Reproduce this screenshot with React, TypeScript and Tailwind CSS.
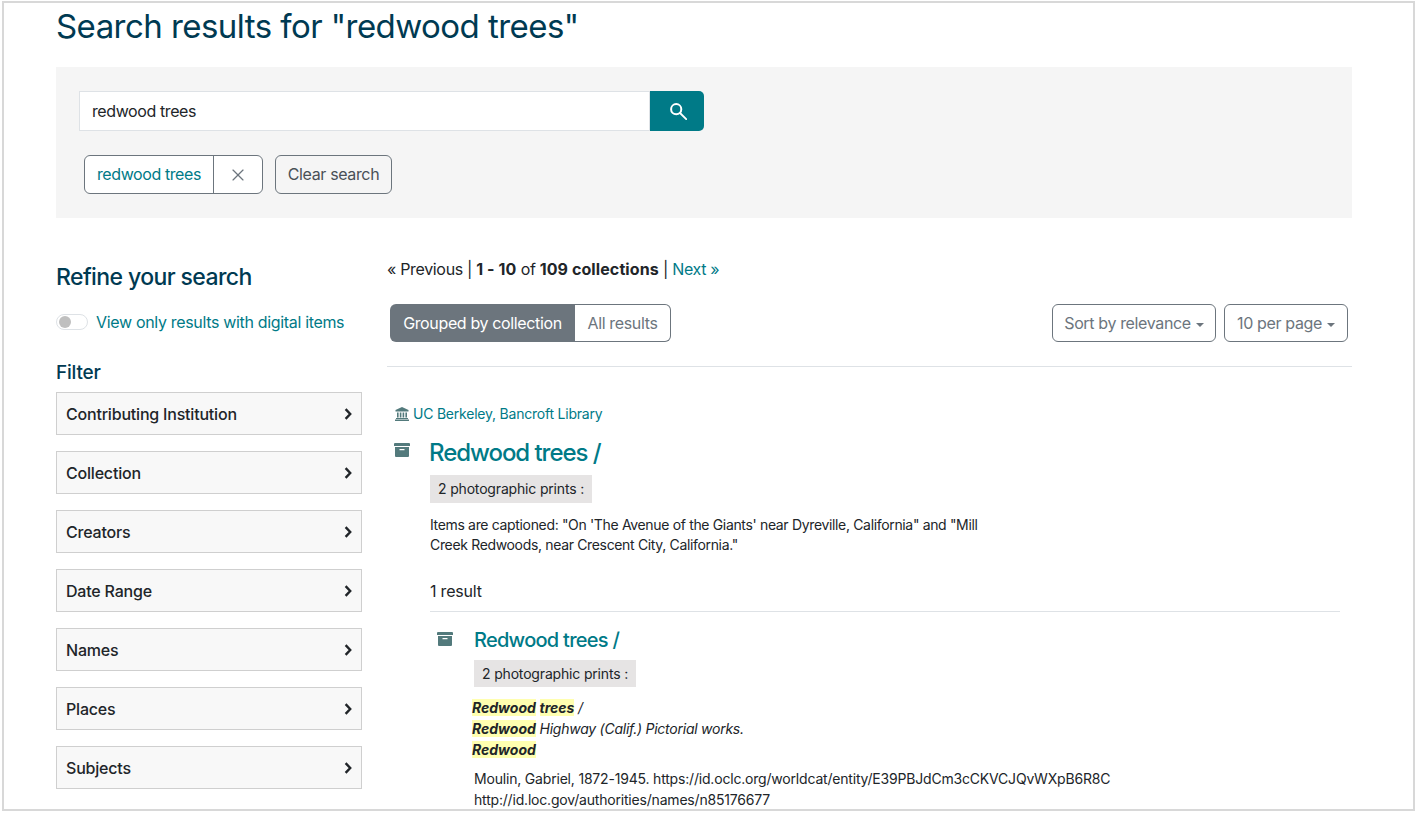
import { X } from "lucide-react";

const FILTERS = ["Contributing Institution", "Collection", "Creators", "Date Range", "Names", "Places", "Subjects"];

function ArchiveIcon() {
  return (
    <svg width="16" height="14" viewBox="0 0 16 14" className="fill-[#537a7c]">
      <path d="M1 0h14a1 1 0 0 1 1 1v2H0V1a1 1 0 0 1 1-1Z" />
      <path d="M1 4h14v9a1 1 0 0 1-1 1H2a1 1 0 0 1-1-1V4Zm4.5 2v1.2h5V6h-5Z" fillRule="evenodd" />
    </svg>
  );
}

function BankIcon() {
  return (
    <svg width="14" height="14" viewBox="0 0 14 14" className="fill-[#537a7c]">
      <path d="M7 0 13.5 3v1.4H.5V3L7 0Z" />
      <path d="M2 5.4h1.6v5H2zM4.8 5.4h1.6v5H4.8zM7.6 5.4h1.6v5H7.6zM10.4 5.4H12v5h-1.6z" />
      <path d="M1 11h12v1H1zM0 12.5h14V14H0z" />
    </svg>
  );
}

function SearchGlyph() {
  return (
    <svg width="17" height="17" viewBox="0 0 17 17" fill="none" className="mt-[1px] ml-[3px] stroke-white">
      <circle cx="6.2" cy="6.2" r="5.1" strokeWidth="2" />
      <path d="M10 10l6.2 6.2" strokeWidth="1.8" strokeLinecap="round" />
    </svg>
  );
}

function Chevron() {
  return (
    <svg width="8" height="12" viewBox="0 0 8 12" fill="none" className="stroke-[#212529]">
      <path d="M1.6 1.2 6.2 6l-4.6 4.8" strokeWidth="2.4" />
    </svg>
  );
}

function Caret() {
  return <span className="ml-[5px] inline-block border-x-[4px] border-t-[4px] border-x-transparent border-t-[#6c757d] align-middle" />;
}

function Mark({ children }: { children: string }) {
  return <mark className="bg-[#ffffb0] font-bold tracking-normal text-[#212529]">{children}</mark>;
}

export default function App() {
  return (
    <div className="h-[813px] w-[1416px] overflow-hidden bg-white pt-[1px] pr-[1px] pb-[2px] pl-[2px] font-['Inter',sans-serif] tracking-[-0.36px] text-[#212529]">
      <div className="h-full overflow-hidden border-2 border-[#d8d8d8] pr-[61px] pl-[52px]">
        <h1 className="pt-[1px] text-[33px] leading-[44px] font-normal tracking-[-0.55px] text-[#003a52]">Search results for "redwood trees"</h1>

        <section className="mt-[19px] h-[151px] bg-[#f5f5f5] pt-[24px] pl-[23px]">
          <div className="flex h-[40px] w-[625px]">
            <div className="flex flex-1 items-center border border-[#dee2e6] bg-white pl-[12px] text-[16px] tracking-[-0.4px]">redwood trees</div>
            <button className="flex w-[54px] items-center justify-center rounded-r-[5px] bg-[#007a87]">
              <SearchGlyph />
            </button>
          </div>
          <div className="mt-[24px] ml-[5px] flex gap-[12px]">
            <div className="flex h-[39px] rounded-[6px] border border-[#6c757d] bg-white text-[16px]">
              <span className="flex w-[129px] items-center justify-center border-r border-[#6c757d] pb-[1px] tracking-[-0.4px] text-[#007a87]">redwood trees</span>
              <span className="flex w-[48px] items-center justify-center text-[#6c757d]"><X size={20} strokeWidth={1.4} /></span>
            </div>
            <button className="h-[39px] w-[117px] rounded-[6px] border border-[#6c757d] pb-[1px] text-[16px] text-[#495057]">Clear search</button>
          </div>
        </section>

        <div className="flex">
          <aside className="w-[306px] shrink-0">
            <h2 className="mt-[44px] text-[23px] leading-[30px] font-medium tracking-[-0.6px] text-[#003a52]">Refine your search</h2>
            <label className="mt-[18px] flex items-center gap-[8px] text-[16px] tracking-[-0.33px] text-[#007a87]">
              <span className="flex h-[16px] w-[32px] items-center rounded-full border border-[#dee2e6] bg-white pl-[2px]">
                <span className="h-[12px] w-[12px] rounded-full bg-[#bfbfbf]" />
              </span>
              View only results with digital items
            </label>
            <h3 className="mt-[26px] text-[19px] leading-[26px] font-medium tracking-[-0.2px] text-[#003a52]">Filter</h3>
            <ul className="mt-[6px] flex flex-col gap-[16px]">
              {FILTERS.map((f) => (
                <li key={f} className="flex h-[43px] items-center justify-between border border-[#cfcfcf] bg-[#f8f8f8] pr-[9px] pl-[9px] text-[16px] font-medium tracking-[-0.2px]">
                  {f}
                  <Chevron />
                </li>
              ))}
            </ul>
          </aside>

          <main className="ml-[25px] flex-1">
            <p className="mt-[39px] text-[16px] leading-[24px] tracking-[-0.33px]">
              « Previous | <b className="font-bold tracking-[0.1px]">1 - 10</b> of <b className="font-bold tracking-[0.1px]">109 collections</b> | <span className="text-[#007a87]">Next »</span>
            </p>
            <div className="mt-[23px] flex justify-between pr-[4px] pl-[3px]">
              <div className="flex h-[38px] text-[16px]">
                <span className="flex w-[185px] items-center justify-center rounded-l-[6px] bg-[#6c757d] text-white">Grouped by collection</span>
                <span className="flex w-[96px] items-center justify-center rounded-r-[6px] border border-l-0 border-[#6c757d] text-[#6c757d]">All results</span>
              </div>
              <div className="flex gap-[8px] text-[16px] text-[#6c757d]">
                <button className="h-[38px] w-[164px] rounded-[6px] border border-[#6c757d]">Sort by relevance<Caret /></button>
                <button className="h-[38px] w-[124px] rounded-[6px] border border-[#6c757d]">10 per page<Caret /></button>
              </div>
            </div>
            <hr className="mt-[24px] border-[#dee2e6]" />

            <div className="mt-[38px] flex items-center gap-[4px] pl-[8px] text-[14px] leading-[18px] tracking-[-0.22px] text-[#007a87]">
              <BankIcon />
              UC Berkeley, Bancroft Library
            </div>

            <div className="mt-[15px] flex pl-[7px]">
              <div className="w-[36px] shrink-0 pt-[5px]"><ArchiveIcon /></div>
              <div className="min-w-0 flex-1 pr-[12px]">
                <h2 className="-ml-[1px] text-[24px] leading-[30px] font-medium tracking-[-1.05px] text-[#007a87]">Redwood trees /</h2>
                <span className="mt-[7px] inline-block h-[28px] bg-[#e6e4e4] px-[8px] text-[14px] leading-[27px] tracking-[-0.17px]">2 photographic prints :</span>
                <p className="mt-[12px] w-[560px] text-[14px] leading-[20px] tracking-[-0.34px]">
                  Items are captioned: "On 'The Avenue of the Giants' near Dyreville, California" and "Mill Creek Redwoods, near Crescent City, California."
                </p>
                <p className="mt-[24px] text-[16px] leading-[24px] tracking-[-0.2px]">1 result</p>
                <hr className="mt-[8px] border-[#dee2e6]" />

                <div className="mt-[13px] flex pl-[7px]">
                  <div className="w-[37px] shrink-0 pt-[7px]"><ArchiveIcon /></div>
                  <div className="flex-1">
                    <h3 className="text-[20px] leading-[30px] font-medium tracking-[-0.73px] text-[#007a87]">Redwood trees /</h3>
                    <span className="mt-[5px] inline-block h-[27px] bg-[#e6e4e4] px-[8px] text-[14px] leading-[27px] tracking-[-0.17px]">2 photographic prints :</span>
                    <div className="mt-[10px] -ml-[2px] text-[14px] leading-[21px] tracking-[-0.25px] italic">
                      <div><Mark>Redwood</Mark> <Mark>trees</Mark> /</div>
                      <div><Mark>Redwood</Mark> Highway (Calif.) Pictorial works.</div>
                      <div><Mark>Redwood</Mark></div>
                    </div>
                    <p className="mt-[8px] text-[14px] leading-[21px] tracking-[-0.19px]">
                      Moulin, Gabriel, 1872-1945. https://id.oclc.org/worldcat/entity/E39PBJdCm3cCKVCJQvWXpB6R8C
                      <br />
                      http://id.loc.gov/authorities/names/n85176677
                    </p>
                  </div>
                </div>
              </div>
            </div>
          </main>
        </div>
      </div>
    </div>
  );
}
